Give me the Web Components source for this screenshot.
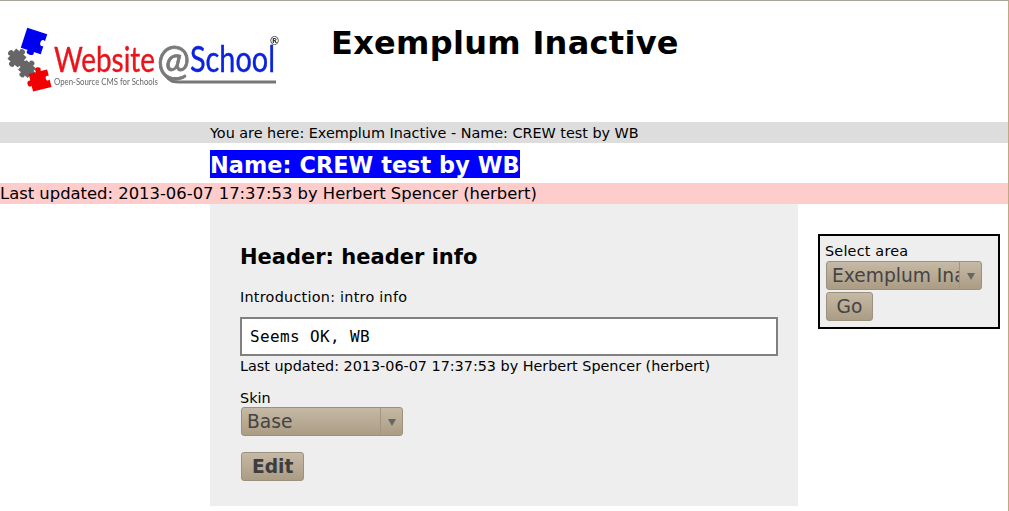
<!DOCTYPE html>
<html lang="en">
<head>
<meta charset="utf-8">
<title>Exemplum Inactive</title>
<style>
html, body { margin: 0; padding: 0; background: #fff; }
body { font-family: "DejaVu Sans", sans-serif; font-size: 14.4px; color: #000; }
</style>
</head>
<body>
<was-page>
    <was-header slot="header" title-text="Exemplum Inactive"></was-header>
    <was-bar slot="crumb" tone="grey" indent>You are here: Exemplum Inactive - Name: CREW test by WB</was-bar>
    <was-title slot="title">Name: CREW test by WB</was-title>
    <was-bar slot="updated" tone="pink">Last updated: 2013-06-07 17:37:53 by Herbert Spencer (herbert)</was-bar>
    <was-content slot="content"></was-content>
    <was-area slot="side"></was-area>
</was-page>

<script>
class WasPage extends HTMLElement {
    constructor() {
        super();
        this.attachShadow({mode: "open"});
        this.shadowRoot.innerHTML = `
            <style>
                :host {
                    display: block;
                    box-sizing: border-box;
                    height: 511px;
                    overflow: hidden;
                    border-top: 1px solid #a9a59b;
                    border-right: 1px solid #bfa981;
                }
                .columns {
                    display: grid;
                    grid-template-columns: 210px 588px 182px;
                }
                .main { grid-column: 2; }
                .side { grid-column: 3; margin-left: 20px; margin-top: 30px; width: 182px; }
            </style>
            <slot name="header"></slot>
            <slot name="crumb"></slot>
            <slot name="title"></slot>
            <slot name="updated"></slot>
            <div class="columns">
                <div class="main"><slot name="content"></slot></div>
                <div class="side"><slot name="side"></slot></div>
            </div>
        `;
    }
}

class WasLogo extends HTMLElement {
    constructor() {
        super();
        this.attachShadow({mode: "open"});
        this.shadowRoot.innerHTML = `
            <style>
                :host { display: block; width: 280px; height: 94px; }
                svg { display: block; filter: blur(.3px); }
                text { font-family: Lato, sans-serif; }
            </style>
            <svg width="280" height="94" viewBox="0 0 280 94">
                <defs>
                    <path id="piece" d="M-8 -8 L-3 -8 C-6 -14 6 -14 3 -8 L8 -8 L8 -3 C14 -6 14 6 8 3 L8 8 L3 8 C6 14 -6 14 -3 8 L-8 8 L-8 3 C-14 6 -14 -6 -8 -3 Z"/>
                    <path id="notched" d="M-10 -10 L10 -10 L10 -3 C5 -6 5 5 10 2 L10 10 L3 10 C6 15 -6 15 -3 10 L-10 10 Z"/>
                    <path id="red" d="M-10 -9 L-2 -9 C-5 -15 6 -15 3 -9 L10 -9 L10 -2 C5 -5 5 5 10 2 L10 10 L-10 10 L-10 4 C-15 6 -15 -4 -10 -2 Z"/>
                </defs>
                <use href="#notched" fill="#0000f0" transform="translate(34 40) rotate(18) scale(1.05)"/>
                <use href="#piece" fill="#666" transform="translate(17 57) rotate(40) scale(.85)"/>
                <use href="#piece" fill="#666" transform="translate(27 68) rotate(40) scale(.8)"/>
                <use href="#red" fill="#f00000" transform="translate(40 79) rotate(-14) scale(.95)"/>
                <text x="54" y="71" fill="#e8141c" font-size="35" stroke="#e8141c" stroke-width=".4" textLength="101" lengthAdjust="spacingAndGlyphs">Website</text>
                <text x="157" y="74" fill="#7a7a7a" font-size="42" stroke="#7a7a7a" stroke-width=".8" textLength="33" lengthAdjust="spacingAndGlyphs">@</text>
                <text x="190" y="71" fill="#0a22e0" font-size="37" stroke="#0a22e0" stroke-width=".4" textLength="85" lengthAdjust="spacingAndGlyphs">School</text>
                <text x="54" y="84" fill="#666" font-size="10" textLength="104" lengthAdjust="spacingAndGlyphs">Open-Source CMS for Schools</text>
                <path d="M166 75 C170 81 174 81 180 81 L276 81" fill="none" stroke="#777" stroke-width="3"/>
                <text x="270" y="44" fill="#333" font-size="11" font-weight="700">®</text>
            </svg>
        `;
    }
}

class WasHeader extends HTMLElement {
    constructor() {
        super();
        this.attachShadow({mode: "open"});
        this.shadowRoot.innerHTML = `
            <style>
                :host {
                    display: flex;
                    height: 121px;
                    align-items: flex-start;
                }
                was-logo { flex: none; }
                h1 {
                    margin: 23px 0 0 51px;
                    font-size: 32px;
                    line-height: 39px;
                    letter-spacing: .3px;
                    font-weight: 700;
                }
            </style>
            <was-logo></was-logo>
            <h1 id="title"></h1>
        `;
    }

    connectedCallback() {
        this.shadowRoot.getElementById("title").textContent = this.getAttribute("title-text");
    }
}

class WasBar extends HTMLElement {
    constructor() {
        super();
        this.attachShadow({mode: "open"});
        this.shadowRoot.innerHTML = `
            <style>
                :host {
                    display: block;
                    height: 21px;
                    line-height: 22px;
                    white-space: nowrap;
                }
                :host([tone="grey"]) { background: #ddd; font-size: 14.4px; letter-spacing: -.02px; }
                :host([tone="pink"]) { background: #ffcccc; font-size: 16.4px; line-height: 22px; }
                :host([indent]) { padding-left: 210px; }
            </style>
            <slot></slot>
        `;
    }
}

class WasTitle extends HTMLElement {
    constructor() {
        super();
        this.attachShadow({mode: "open"});
        this.shadowRoot.innerHTML = `
            <style>
                :host {
                    display: block;
                    height: 40px;
                    padding: 7px 0 0 210px;
                    box-sizing: border-box;
                }
                span {
                    display: inline-block;
                    background: #0000ff;
                    color: #fff;
                    font-size: 22.4px;
                    font-weight: 700;
                    letter-spacing: .05px;
                    line-height: 30px;
                    height: 28px;
                    vertical-align: top;
                    white-space: nowrap;
                    overflow: hidden;
                }
            </style>
            <span><slot></slot></span>
        `;
    }
}

class WasSelect extends HTMLElement {
    constructor() {
        super();
        this.attachShadow({mode: "open"});
        this.shadowRoot.innerHTML = `
            <style>
                :host {
                    display: flex;
                    box-sizing: border-box;
                    height: 29px;
                    margin-left: 1px;
                    border: 1px solid #9a917f;
                    border-radius: 3px;
                    background: linear-gradient(#c6b9a5, #ab9c84);
                    color: #444;
                    font-size: 18.67px;
                    line-height: 27px;
                    overflow: hidden;
                }
                .value { flex: 1; min-width: 0; padding-left: 5px; white-space: nowrap; overflow: hidden; }
                .arrow {
                    flex: none;
                    width: 21px;
                    border-left: 1px solid #a3957e;
                    display: flex;
                    align-items: center;
                    justify-content: center;
                }
                svg { display: block; }
            </style>
            <div class="value"><slot></slot></div>
            <div class="arrow"><svg width="8" height="8" viewBox="0 0 8 8"><path d="M0 1 H8 L4 8 Z" fill="#666"/></svg></div>
        `;
    }
}

class WasButton extends HTMLElement {
    constructor() {
        super();
        this.attachShadow({mode: "open"});
        this.shadowRoot.innerHTML = `
            <style>
                :host {
                    display: inline-block;
                    box-sizing: border-box;
                    height: 29px;
                    margin-left: 1px;
                    padding: 0 10px;
                    border: 1px solid #9a917f;
                    border-radius: 3px;
                    background: linear-gradient(#c6b9a5, #ab9c84);
                    color: #444;
                    font-size: 18.67px;
                    line-height: 27px;
                    text-align: center;
                }
                :host([strong]) { font-weight: 700; color: #3d3d3d; }
            </style>
            <slot></slot>
        `;
    }
}

class WasContent extends HTMLElement {
    constructor() {
        super();
        this.attachShadow({mode: "open"});
        this.shadowRoot.innerHTML = `
            <style>
                :host {
                    display: block;
                    box-sizing: border-box;
                    height: 302px;
                    background: #eee;
                    padding: 40px 20px 0 30px;
                    font-size: 14.4px;
                }
                h2 { margin: 0; font-size: 21px; line-height: 26px; font-weight: 700; }
                p { margin: 0; line-height: 16px; white-space: nowrap; }
                .intro { margin-top: 19px; letter-spacing: .25px; }
                .note {
                    box-sizing: border-box;
                    height: 39px;
                    margin-top: 12px;
                    border: 2px solid #808080;
                    background: #fff;
                    padding-left: 8px;
                    font-family: "DejaVu Sans Mono", monospace;
                    font-size: 16px;
                    letter-spacing: .37px;
                    line-height: 35px;
                }
                .updated { margin-top: 2px; letter-spacing: -.02px; }
                label { display: block; margin-top: 16px; line-height: 17px; }
                was-select { width: 162px; }
                was-button { margin-top: 16px; }
            </style>
            <h2>Header: header info</h2>
            <p class="intro">Introduction: intro info</p>
            <div class="note">Seems OK, WB</div>
            <p class="updated">Last updated: 2013-06-07 17:37:53 by Herbert Spencer (herbert)</p>
            <label>Skin</label>
            <was-select>Base</was-select>
            <was-button strong>Edit</was-button>
        `;
    }
}

class WasArea extends HTMLElement {
    constructor() {
        super();
        this.attachShadow({mode: "open"});
        this.shadowRoot.innerHTML = `
            <style>
                :host {
                    display: block;
                    box-sizing: border-box;
                    height: 95px;
                    border: 2px solid #000;
                    background: #eee;
                    padding: 7px 5px 0 5px;
                    font-size: 14.4px;
                }
                label { display: block; line-height: 16px; margin-bottom: 2px; letter-spacing: .2px; }
                was-select { width: 156px; }
                was-button { display: block; width: 47px; padding: 0; margin-top: 2px; }
            </style>
            <label>Select area</label>
            <was-select>Exemplum Inactive</was-select>
            <was-button>Go</was-button>
        `;
    }
}

customElements.define("was-logo", WasLogo);
customElements.define("was-header", WasHeader);
customElements.define("was-bar", WasBar);
customElements.define("was-title", WasTitle);
customElements.define("was-select", WasSelect);
customElements.define("was-button", WasButton);
customElements.define("was-content", WasContent);
customElements.define("was-area", WasArea);
customElements.define("was-page", WasPage);
</script>
</body>
</html>
